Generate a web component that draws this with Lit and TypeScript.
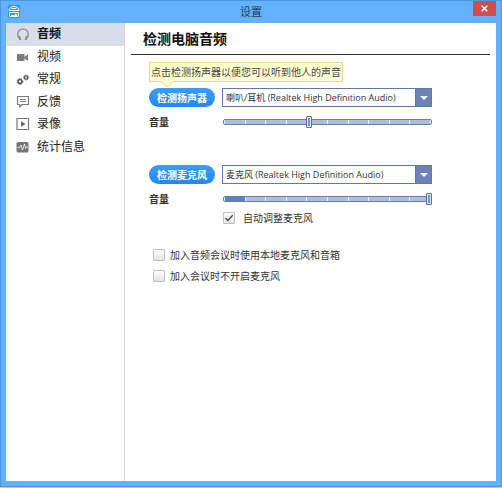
import { LitElement, html, css, svg, nothing } from "lit";
import { customElement, property, state } from "lit/decorators.js";
import { classMap } from "lit/directives/class-map.js";

const icons: Record<string, unknown> = {
  headphones: svg`<g fill="none" stroke="#868686"><path stroke-width="1.2" d="M2.200 10.500C.6 6 2.800 2 7 2S13.400 6 11.800 10.500"/><path stroke-width="2" d="M3 9L4.300 13M11 9L9.700 13"/></g>`,
  camera: svg`<path fill="#7c7c7c" d="M1 4h7.500v7H1zM8.500 7L12 4v7L8.500 8.500z"/>`,
  gears: svg`<g fill="none" stroke="#555"><circle cx="4" cy="9.500" r="1.900" stroke-width="1.500"/><circle cx="4" cy="9.500" r="2.900" stroke-width="1" stroke-dasharray="1.200 1.200"/><circle cx="10" cy="5.500" r="1.600" stroke-width="1.300"/><circle cx="10" cy="5.500" r="2.500" stroke-width="1" stroke-dasharray="1 1"/></g>`,
  feedback: svg`<g fill="none" stroke="#7c7c7c"><path stroke-width="1.200" stroke-linejoin="round" d="M1.500 1.500h11v8H6L3.800 12V9.500H1.500z"/><path d="M4 4.500h6M4 6.500h6"/></g>`,
  record: svg`<path fill="none" stroke="#777" stroke-width="1.200" d="M1 1.500h11.500v11H1z"/><path stroke="#777" d="M1 12.500h11.500"/><path fill="#666" d="M5 4.200l4.500 2.800L5 9.800z"/>`,
  stats: svg`<rect x=".5" y="2" width="12" height="10.500" rx="1.500" fill="#777"/><path fill="none" stroke="#fff" stroke-width=".8" d="M1.500 7.500h2L5 5l1.500 5L8.500 4l1.200 4.500 1-1.500H12"/>`,
};

const sections = [
  { id: "headphones", label: "音频" },
  { id: "camera", label: "视频" },
  { id: "gears", label: "常规" },
  { id: "feedback", label: "反馈" },
  { id: "record", label: "录像" },
  { id: "stats", label: "统计信息" },
];

@customElement("settings-nav")
class SettingsNav extends LitElement {
  @state() private selected = "headphones";

  static styles = css`
    :host {
      display: block;
    }
    .list {
      display: grid;
      grid-template-rows: repeat(6, 1fr);
      height: 135px;
    }
    .item {
      display: flex;
      align-items: center;
      gap: 7px;
      padding: 0 10px;
      border: 0;
      background: none;
      color: #222;
      font: inherit;
      font-size: 12px;
      line-height: 16px;
      text-align: left;
    }
    .selected {
      background: #d7dee9;
      font-weight: bold;
      color: #111;
    }
    .icon {
      width: 14px;
      height: 14px;
      flex: none;
    }
  `;

  render() {
    return html`<nav class="list">
      ${sections.map(
        (s) => html`<button
          type="button"
          class=${classMap({ item: true, selected: s.id === this.selected })}
          aria-current=${s.id === this.selected ? "page" : nothing}
          @click=${() => (this.selected = s.id)}
        >
          <svg class="icon" viewBox="0 0 14 14" aria-hidden="true">${icons[s.id]}</svg>
          <span>${s.label}</span>
        </button>`
      )}
    </nav>`;
  }
}

@customElement("device-panel")
class DevicePanel extends LitElement {
  @property() action = "";
  @property() device = "";
  @property({ type: Number }) volume = 0;
  @property({ type: Number }) level = 0;

  static styles = css`
    :host {
      display: grid;
      grid-template-columns: 66px minmax(0, 210px);
      column-gap: 7px;
      row-gap: 6px;
      align-items: center;
    }
    .test {
      height: 19px;
      padding: 0;
      border: 0;
      border-radius: 10px;
      background: linear-gradient(#3d9cf8, #2587ee);
      color: #fff;
      font: inherit;
      font-weight: bold;
      line-height: 16px;
    }
    .combo {
      display: grid;
      grid-template-columns: minmax(0, 1fr) 17px;
      height: 19px;
    }
    .select {
      grid-area: 1 / 1 / 2 / 3;
      appearance: none;
      box-sizing: border-box;
      height: 19px;
      margin: 0;
      padding: 0 18px 0 3px;
      border: 1px solid #6078ad;
      border-radius: 0;
      background: #fff;
      color: #333;
      font: inherit;
      font-size: 9px;
    }
    .arrow {
      grid-area: 1 / 2 / 2 / 3;
      display: grid;
      place-items: center;
      background: #6d83b6;
      border: 1px solid #6078ad;
      z-index: 1;
      pointer-events: none;
    }
    .label {
      font-weight: bold;
      line-height: 18px;
    }
    .slider {
      display: grid;
      align-items: center;
      height: 18px;
      padding: 0 0 0 1px;
    }
    .scale {
      grid-area: 1 / 1;
      box-sizing: border-box;
      height: 6px;
      border: 1px solid #647eb3;
      border-radius: 2px;
      padding: 0 1px;
      background: #eef2f9;
      display: grid;
      grid-template-columns: repeat(10, 1fr);
      column-gap: 1px;
    }
    .segment {
      background: #b1bdd7;
    }
    .lit {
      background: #607fbd;
    }
    .range {
      grid-area: 1 / 1;
      appearance: none;
      width: 100%;
      height: 12px;
      margin: 0;
      background: none;
    }
    .range::-webkit-slider-thumb {
      appearance: none;
      box-sizing: border-box;
      width: 6px;
      height: 12px;
      border: 1px solid #5871a5;
      border-radius: 1px;
      background: #7e94c2;
      box-shadow: inset 0 0 0 1px #dfe6f3;
    }
  `;

  render() {
    return html`
      <button type="button" class="test">${this.action}</button>
      <div class="combo">
        <select class="select" aria-label=${this.action}>
          <option>${this.device}</option>
        </select>
        <span class="arrow">
          <svg width="8" height="4" viewBox="0 0 8 4" aria-hidden="true">
            <path fill="#fff" d="M0 0h8L4 4z" />
          </svg>
        </span>
      </div>
      <label class="label" for="volume">音量</label>
      <div class="slider">
        <div class="scale">
          ${Array.from(
            { length: 10 },
            (_, i) => html`<span class=${classMap({ segment: true, lit: i < this.level })}></span>`
          )}
        </div>
        <input id="volume" class="range" type="range" min="0" max="100" .value=${String(this.volume)} />
      </div>
    `;
  }
}

@customElement("check-option")
class CheckOption extends LitElement {
  @property() label = "";
  @property({ type: Boolean }) checked = false;

  static styles = css`
    :host {
      display: block;
    }
    .option {
      display: grid;
      grid-template-columns: 12px 1fr;
      column-gap: 5px;
      align-items: center;
      line-height: 16px;
    }
    :host([spaced]) .option {
      column-gap: 8px;
    }
    .box {
      grid-area: 1 / 1;
      appearance: none;
      box-sizing: border-box;
      width: 12px;
      height: 12px;
      margin: 0;
      border: 1px solid #c2c2c2;
      border-radius: 1px;
      background: linear-gradient(#fdfdfd, #e4e4e4);
    }
    .tick {
      grid-area: 1 / 1;
      visibility: hidden;
      z-index: 1;
      pointer-events: none;
    }
    .box:checked + .tick {
      visibility: visible;
    }
  `;

  render() {
    return html`<label class="option">
      <input class="box" type="checkbox" .checked=${this.checked} />
      <svg class="tick" width="12" height="12" viewBox="0 0 12 12" aria-hidden="true">
        <path fill="none" stroke="#444" stroke-width="1.300" d="M2.500 6l2.300 2.500L9.700 3.300" />
      </svg>
      <span>${this.label}</span>
    </label>`;
  }
}

@customElement("app-root")
class AppRoot extends LitElement {
  static styles = css`
    :host {
      display: flex;
      flex-direction: column;
      box-sizing: border-box;
      min-height: 100vh;
      border-bottom: 1px solid #a5d3f2;
      color: #333;
      font-family: "Open Sans", "Noto Sans CJK SC", sans-serif;
      font-size: 10px;
      line-height: 16px;
    }
    .window {
      flex: 1;
      display: flex;
      flex-direction: column;
      padding: 0 5px 5px;
      border: 1px solid #4b96dd;
      background: #64b1fb;
    }
    .titlebar {
      display: grid;
      grid-template-columns: 28px 1fr 28px;
      align-items: start;
      height: 22px;
    }
    .logo {
      margin: 4px 0 0 2px;
    }
    .title {
      margin: 0;
      padding-top: 3px;
      font-size: 11px;
      font-weight: normal;
      line-height: 16px;
      text-align: center;
      color: #1d3c5e;
    }
    .close {
      display: grid;
      place-items: center;
      width: 23px;
      height: 15px;
      padding: 0;
      border: 0;
      background: #c9504f;
      justify-self: end;
    }
    .body {
      flex: 1;
      display: grid;
      grid-template-columns: 119px minmax(0, 1fr);
      background: #fff;
    }
    .sidebar {
      border-right: 1px solid #d8d8d8;
    }
    .main {
      padding: 0 6px;
    }
    .heading {
      margin: 0;
      padding: 0 12px;
      border-bottom: 1px solid #333;
      font-size: 14px;
      line-height: 31px;
      color: #111;
    }
    .content {
      padding: 7px 0 0 18px;
    }
    .tip {
      position: relative;
      box-sizing: border-box;
      width: fit-content;
      height: 20px;
      margin-bottom: 6px;
      padding: 0 1px;
      border: 1px solid #dfdc8b;
      background: #ffffd2;
      line-height: 18px;
      color: #444;
    }
    .tail {
      position: absolute;
      left: 10px;
      top: 18px;
    }
    .microphone {
      margin-top: 34px;
    }
    .auto {
      margin: 2px 0 21px 74px;
    }
    .options {
      display: grid;
      row-gap: 5px;
      padding-left: 4px;
    }
  `;

  render() {
    return html`<div class="window">
      <header class="titlebar">
        <svg class="logo" width="12" height="13" viewBox="0 0 12 13" aria-hidden="true">
          <rect width="12" height="13" rx="2" fill="#1a9cec" />
          <path fill="none" stroke="#fff" d="M1 5.500C1.500 2.500 3.500 1.500 6 1.500s4.500 1 5 4zM3.500 3.500h5M1.500 11.500v-4h9v4" />
          <path fill="#fff" d="M1.500 12L4 9.500l1.500 1L8 8.500l2.500 3.500z" />
        </svg>
        <h1 class="title">设置</h1>
        <button type="button" class="close" aria-label="关闭">
          <svg width="7" height="7" viewBox="0 0 7 7" aria-hidden="true">
            <path fill="none" stroke="#fff" stroke-width="1.500" d="M.7.7l5.600 5.600M6.300.7L.7 6.300" />
          </svg>
        </button>
      </header>
      <div class="body">
        <settings-nav class="sidebar"></settings-nav>
        <main class="main">
          <h2 class="heading">检测电脑音频</h2>
          <div class="content">
            <div class="tip">
              点击检测扬声器以便您可以听到他人的声音
              <svg class="tail" width="14" height="7" viewBox="0 0 14 7" aria-hidden="true">
                <path fill="#ffffd2" d="M0 0h14L7 6z" />
                <path fill="none" stroke="#dfdc8b" d="M0 0l7 6 7-6" />
              </svg>
            </div>
            <device-panel
              action="检测扬声器"
              device="喇叭/耳机 (Realtek High Definition Audio)"
              volume="41"
            ></device-panel>
            <device-panel
              class="microphone"
              action="检测麦克风"
              device="麦克风 (Realtek High Definition Audio)"
              volume="100"
              level="1"
            ></device-panel>
            <check-option class="auto" spaced checked label="自动调整麦克风"></check-option>
            <div class="options">
              <check-option label="加入音频会议时使用本地麦克风和音箱"></check-option>
              <check-option label="加入会议时不开启麦克风"></check-option>
            </div>
          </div>
        </main>
      </div>
    </div>`;
  }
}
